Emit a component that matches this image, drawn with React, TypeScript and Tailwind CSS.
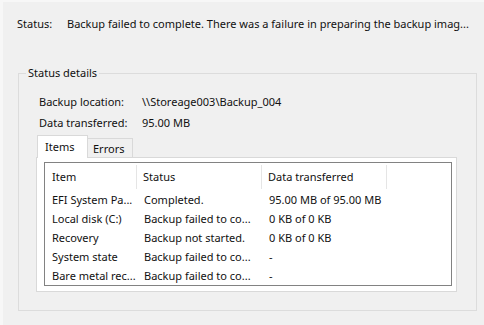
import React from 'react';

const rows = [
  { item: 'EFI System Pa...', status: 'Completed.', data: '95.00 MB of 95.00 MB' },
  { item: 'Local disk (C:)', status: 'Backup failed to co...', data: '0 KB of 0 KB' },
  { item: 'Recovery', status: 'Backup not started.', data: '0 KB of 0 KB' },
  { item: 'System state', status: 'Backup failed to co...', data: '-' },
  { item: 'Bare metal rec...', status: 'Backup failed to co...', data: '-' },
];

const App: React.FC = () => {
  return (
    <div className="w-[484px] h-[325px] overflow-hidden bg-[#f0f0f0] border-l-[3px] border-t-[2px] border-[#f7f7f7] text-[11px] text-[#111] font-['Noto_Sans','Open_Sans',sans-serif] leading-[16px]">
      {/* Status line */}
      <div className="flex items-center pt-[14px] pl-[14px] whitespace-nowrap">
        <span className="w-[50px] shrink-0">Status:</span>
        <span>Backup failed to complete. There was a failure in preparing the backup imag...</span>
      </div>

      {/* Group box */}
      <fieldset className="ml-[15px] mt-[33px] w-[459px] h-[246px] border border-[#dcdcdc] p-0">
        <legend className="ml-[7px] px-[2px]">Status details</legend>

        <div className="pl-[20px] pt-[10px]">
          <div className="flex items-center h-[21px]">
            <span className="w-[103px] shrink-0">Backup location:</span>
            <span>\\Storeage003\Backup_004</span>
          </div>
          <div className="flex items-center h-[21px]">
            <span className="w-[103px] shrink-0">Data transferred:</span>
            <span>95.00 MB</span>
          </div>
        </div>

        {/* Tabs */}
        <div className="ml-[17px] mt-[2px] w-[421px]">
          <div className="flex items-end h-[22px] pl-[1px]">
            <div className="relative z-10 h-[23px] w-[51px] shrink-0 -mb-px bg-white border border-[#d9d9d9] border-b-0 pl-[7px] pt-[3px]">
              Items
            </div>
            <div className="h-[19px] w-[45px] shrink-0 bg-[#f0f0f0] border border-[#d9d9d9] border-l-0 border-b-0 pl-[5px] pt-[2px]">
              Errors
            </div>
          </div>
          <div className="bg-white border border-[#d9d9d9] h-[135px] pl-[7px] pr-[4px] pt-[4px]">
            <div className="border border-[#828282] bg-white h-[124px]">
              <div className="flex h-[27px] items-center whitespace-nowrap">
                <div className="w-[92px] shrink-0 h-[24px] pl-[7px] flex items-center border-r border-[#e5e5e5]">Item</div>
                <div className="w-[125px] shrink-0 h-[24px] pl-[6px] flex items-center border-r border-[#e5e5e5]">Status</div>
                <div className="w-[125px] shrink-0 h-[24px] pl-[6px] flex items-center border-r border-[#e5e5e5]">Data transferred</div>
              </div>
              {rows.map((r) => (
                <div key={r.item} className="flex h-[19px] items-center whitespace-nowrap">
                  <div className="w-[92px] shrink-0 pl-[7px] overflow-hidden">{r.item}</div>
                  <div className="w-[125px] shrink-0 pl-[7px] overflow-hidden">{r.status}</div>
                  <div className="w-[125px] shrink-0 pl-[7px] overflow-hidden">{r.data}</div>
                </div>
              ))}
            </div>
          </div>
        </div>
      </fieldset>
    </div>
  );
};

export default App;
